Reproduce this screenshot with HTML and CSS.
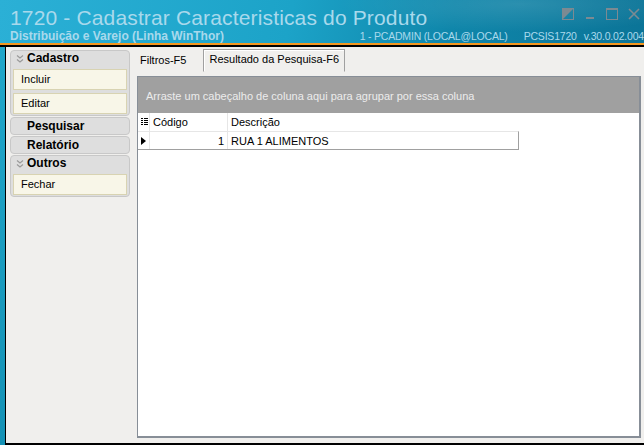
FILE: index.html
```html
<!DOCTYPE html>
<html lang="pt-BR">
<head>
    <meta charset="UTF-8">
    <title>1720 - Cadastrar Caracteristicas do Produto</title>
    <link rel="stylesheet" href="styles.css">
</head>
<body>

    <!-- Cabecalho da janela -->
    <div class="header">
        <div class="titleRow">
            <span class="title">1720 - Cadastrar Caracteristicas do Produto</span>
            <div class="winButtons">
                <svg width="12" height="12" viewBox="0 0 12 12"><rect x="0.5" y="0.5" width="11" height="11" fill="none" stroke="#7c8a92"/><polygon points="0,12 12,0 0,0" fill="#7c8a92"/></svg>
                <svg width="12" height="12" viewBox="0 0 12 12"><rect x="2" y="9" width="8" height="2" fill="#7c8a92"/></svg>
                <svg width="12" height="12" viewBox="0 0 12 12"><rect x="0.5" y="0.5" width="11" height="11" fill="none" stroke="#7c8a92"/><rect x="0" y="0" width="12" height="2" fill="#7c8a92"/></svg>
                <svg width="12" height="12" viewBox="0 0 12 12"><path d="M1 1 L11 11 M11 1 L1 11" stroke="#7c8a92" stroke-width="1.6"/></svg>
            </div>
        </div>
        <div class="infoRow">
            <span class="subtitle">Distribuição e Varejo (Linha WinThor)</span>
            <span class="sessionInfo">
                <span>1 - PCADMIN (LOCAL@LOCAL)</span>
                <span class="gapBig">PCSIS1720</span>
                <span class="gapSmall">v.30.0.02.004</span>
            </span>
        </div>
    </div>
    <div class="orangeLine"></div>

    <div class="main">
        <!-- Menu lateral -->
        <div class="sidebar">
            <div class="group">
                <div class="groupTitle">
                    <svg class="chevron" width="8" height="8" viewBox="0 0 8 8"><path d="M1 0.5 L4 3 L7 0.5 M1 4.5 L4 7 L7 4.5" fill="none" stroke="#9a9a9a" stroke-width="1.2"/></svg>
                    Cadastro
                </div>
                <div class="item">Incluir</div>
                <div class="item">Editar</div>
            </div>
            <div class="group closed"><div class="groupTitle">Pesquisar</div></div>
            <div class="group closed"><div class="groupTitle">Relatório</div></div>
            <div class="group">
                <div class="groupTitle">
                    <svg class="chevron" width="8" height="8" viewBox="0 0 8 8"><path d="M1 0.5 L4 3 L7 0.5 M1 4.5 L4 7 L7 4.5" fill="none" stroke="#9a9a9a" stroke-width="1.2"/></svg>
                    Outros
                </div>
                <div class="item">Fechar</div>
            </div>
        </div>

        <!-- Abas e grade -->
        <div class="content">
            <div class="tabs">
                <div class="tab">Filtros-F5</div>
                <div class="tab active">Resultado da Pesquisa-F6</div>
            </div>
            <div class="grid">
                <div class="groupPanel">Arraste um cabeçalho de coluna aqui para agrupar por essa coluna</div>
                <div class="gridRow headRow">
                    <div class="cell ind">
                        <svg width="7" height="8" viewBox="0 0 7 8"><path d="M0 0.5h2M3 0.5h4M0 2.5h2M3 2.5h4M0 4.5h2M3 4.5h4M0 6.5h2M3 6.5h4" stroke="#000" stroke-width="1"/></svg>
                    </div>
                    <div class="cell code">Código</div>
                    <div class="cell desc">Descrição</div>
                </div>
                <div class="gridRow dataRow">
                    <div class="cell ind"><span class="arrow"></span></div>
                    <div class="cell code num">1</div>
                    <div class="cell desc">RUA 1 ALIMENTOS</div>
                </div>
            </div>
        </div>
    </div>

</body>
</html>
```

FILE: styles.css
```css
/* Janela */
body {
    margin: 0;
    width: 644px;
    height: 445px;
    overflow: hidden;
    background: linear-gradient(180deg, #22a9cc 0%, #1592b6 100%);
    font-family: 'Liberation Sans', Arial, sans-serif;
    font-size: 11px;
    color: #000;
}

.header {
    height: 43px;
    box-sizing: border-box;
    padding: 0 0 0 10px;
    background:
        radial-gradient(ellipse 260px 40px at 520px 4px, rgba(255,255,255,0.12), rgba(255,255,255,0) 70%),
        linear-gradient(100deg, #2bb0d6 0%, #1ca3c8 45%, #0f86aa 70%, #0b7497 100%);
    color: #a9d9ec;
}

.titleRow {
    display: flex;
    justify-content: space-between;
    height: 30px;
}

.title {
    font-size: 21px;
    letter-spacing: 0.15px;
    line-height: 30px;
    padding-top: 3px;
}

.winButtons {
    display: flex;
    gap: 10px;
    padding: 8px 4px 0 0;
}

.infoRow {
    display: flex;
    justify-content: space-between;
    line-height: 12px;
}

.subtitle {
    font-weight: bold;
    font-size: 12px;
}

.sessionInfo {
    white-space: nowrap;
    display: flex;
    font-size: 10.5px;
    letter-spacing: -0.2px;
}

.gapBig {
    margin-left: 16px;
}

.gapSmall {
    margin-left: 7px;
}

.orangeLine {
    height: 2px;
    background: #f5961e;
    border-bottom: 2px solid #000;
}

/* Area principal */
.main {
    display: flex;
    margin-left: 5px;
    height: 396px;
    background: #f0efed;
    border-left: 1px solid #000;
    border-bottom: 2px solid #000;
}

.sidebar {
    width: 120px;
    padding: 3px 0 0 4px;
    display: flex;
    flex-direction: column;
    gap: 1px;
}

.group {
    background: #dedede;
    border: 1px solid #c8c8c8;
    border-radius: 4px;
    padding: 0 2px 1px 2px;
}

.group.closed {
    padding-bottom: 0;
}

.group.closed .groupTitle {
    height: 16px;
    line-height: 16px;
}

.groupTitle {
    height: 15px;
    line-height: 15px;
    font-weight: bold;
    font-size: 12px;
    padding-left: 14px;
    position: relative;
}

.chevron {
    position: absolute;
    left: 3px;
    top: 4px;
}

.item {
    height: 19px;
    line-height: 19px;
    margin-top: 3px;
    padding-left: 7px;
    background: #f8f6e8;
    border: 1px solid #d8d3b2;
}

.content {
    flex: 1;
    padding: 2px 3px 5px 7px;
    display: flex;
    flex-direction: column;
}

.tabs {
    display: flex;
    height: 22px;
    align-items: flex-start;
    gap: 14px;
    margin-bottom: 5px;
}

.tab {
    padding: 5px 3px 0 3px;
}

.tab.active {
    padding: 3px 5px 0 5px;
    height: 18px;
    border: 1px solid #a0a0a0;
    border-bottom: 1px solid #f0efed;
    box-shadow: inset 1px 1px 0 #fff;
}

.grid {
    flex: 1;
    background: #fff;
    border: 1px solid #878e97;
    border-right-width: 2px;
    border-bottom-width: 2px;
}

.groupPanel {
    height: 36px;
    line-height: 38px;
    background: #a0a0a0;
    color: #ececec;
    padding-left: 8px;
}

.gridRow {
    display: flex;
    width: 380px;
    height: 18px;
    line-height: 18px;
}

.headRow .cell {
    border-right: 1px solid #e6e6e6;
}

.dataRow {
    height: 17px;
    border-top: 1px solid #e6e6e6;
    border-bottom: 1px solid #a0a0a0;
    border-right: 1px solid #a0a0a0;
}

.cell {
    box-sizing: border-box;
    padding-left: 3px;
}

.cell.ind {
    width: 12px;
    display: flex;
    align-items: center;
}

.dataRow .cell {
    border-right: 1px solid #e6e6e6;
}

.cell.code {
    width: 78px;
}

.cell.num {
    text-align: right;
    padding-right: 3px;
}

.cell.desc {
    flex: 1;
    border-right: none !important;
}

.arrow {
    width: 0;
    height: 0;
    border-top: 4px solid transparent;
    border-bottom: 4px solid transparent;
    border-left: 5px solid #000;
}
```
